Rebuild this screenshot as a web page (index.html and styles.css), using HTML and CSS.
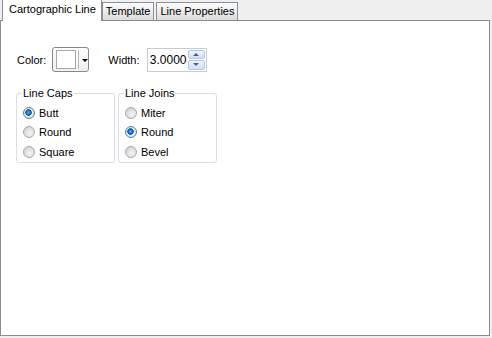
FILE: index.html
```html
<!DOCTYPE html>
<html>
<head>
  <meta charset="UTF-8">
  <title>Cartographic Line</title>
  <link rel="stylesheet" href="styles.css">
</head>
<body>
  <div class="tabs">
    <div class="tab active">Cartographic Line</div>
    <div class="tab">Template</div>
    <div class="tab">Line Properties</div>
  </div>

  <div class="panel">
    <div class="row">
      <span class="label">Color:</span>
      <div class="color-btn">
        <span class="swatch"></span>
        <span class="sep"></span>
        <span class="arrow"></span>
      </div>
      <span class="label width-label">Width:</span>
      <div class="spin">
        <span class="spin-value">3.0000</span>
        <div class="spin-btns">
          <span class="spin-btn up"><i></i></span>
          <span class="spin-btn down"><i></i></span>
        </div>
      </div>
    </div>

    <div class="groups">
      <fieldset class="group">
        <legend>Line Caps</legend>
        <label class="radio"><span class="dot checked"></span>Butt</label>
        <label class="radio"><span class="dot"></span>Round</label>
        <label class="radio"><span class="dot"></span>Square</label>
      </fieldset>
      <fieldset class="group">
        <legend>Line Joins</legend>
        <label class="radio"><span class="dot"></span>Miter</label>
        <label class="radio"><span class="dot checked"></span>Round</label>
        <label class="radio"><span class="dot"></span>Bevel</label>
      </fieldset>
    </div>
  </div>
</body>
</html>
```

FILE: styles.css
```css
body {
  margin: 0;
  background-color: #f0f0f0;
  font-family: "Liberation Sans", Arial, sans-serif;
  font-size: 11px;
  color: #000;
}

.tabs {
  display: flex;
  align-items: flex-end;
  height: 20px;
  padding-left: 2px;
}

.tab {
  height: 17px;
  line-height: 17px;
  padding: 0 3px;
  margin-right: 2px;
  border: 1px solid #8c8f98;
  border-bottom: none;
  background: linear-gradient(#fdfdfd, #e8e8e8 60%, #dcdcdc);
}

.tab.active {
  position: relative;
  z-index: 1;
  height: 21px;
  line-height: 19px;
  padding: 0 5px 0 6px;
  margin-right: 0;
  margin-bottom: -1px;
  background: #fff;
}

.panel {
  width: 488px;
  height: 314px;
  border: 1px solid #898c95;
  background: #fff;
}

.row {
  display: flex;
  align-items: center;
  margin: 26px 0 0 16px;
  height: 25px;
}

.label {
  margin-right: 6px;
}

.color-btn {
  display: flex;
  align-items: center;
  width: 35px;
  height: 23px;
  border: 1px solid #7f8a96;
  border-radius: 3px;
  background: linear-gradient(#fefefe, #f0f0ea);
}

.swatch {
  width: 19px;
  height: 17px;
  margin-left: 3px;
  border: 1px solid #a8a8a8;
  background: #fff;
}

.sep {
  width: 1px;
  height: 19px;
  margin-left: 2px;
  background: #b8b8b8;
}

.arrow {
  margin-left: 3px;
  width: 0;
  height: 0;
  border-left: 3px solid transparent;
  border-right: 3px solid transparent;
  border-top: 3px solid #000;
  margin-top: 2px;
}

.width-label {
  margin-left: 19px;
}

.spin {
  display: flex;
  width: 58px;
  height: 22px;
  margin-left: 1px;
  border: 1px solid #c8cdd2;
  background: #fff;
}

.spin-value {
  flex: 1;
  text-align: right;
  line-height: 22px;
  padding-right: 1px;
  font-size: 12px;
}

.spin-btns {
  display: flex;
  flex-direction: column;
  gap: 1px;
  padding: 1px 1px 1px 0;
}

.spin-btn {
  display: flex;
  align-items: center;
  justify-content: center;
  width: 15px;
  height: 9px;
  border: 1px solid #b4c6e6;
  border-radius: 2px;
  background: linear-gradient(#eef3fc, #d3dff4);
}

.spin-btn i {
  width: 0;
  height: 0;
  border-left: 3px solid transparent;
  border-right: 3px solid transparent;
}

.spin-btn.up i {
  border-bottom: 3px solid #4d6185;
}

.spin-btn.down i {
  border-top: 3px solid #4d6185;
}

.groups {
  display: flex;
  gap: 3px;
  margin: 15px 0 0 15px;
}

.group {
  width: 99px;
  height: 76px;
  margin: 0;
  padding: 4px 0 0 6px;
  border: 1px solid #d5dfe5;
  border-radius: 3px;
  box-sizing: border-box;
}

.group legend {
  padding: 0 1px;
  margin-left: -1px;
}

.radio {
  display: flex;
  align-items: center;
  height: 19.5px;
}

.dot {
  width: 12px;
  height: 12px;
  margin-right: 4px;
  border: 1px solid #a7a9aa;
  border-radius: 50%;
  background: radial-gradient(circle at 60% 65%, #f4f4f4, #d8d8d8 70%, #c8c8c8);
  box-sizing: border-box;
}

.dot.checked {
  border-color: #5a7ea3;
  background: radial-gradient(circle at 45% 45%, #5fb0f0 0, #1a6fc0 25%, #0b4f9e 38%, #e8eef4 45%, #cfd6dc 100%);
}
```
